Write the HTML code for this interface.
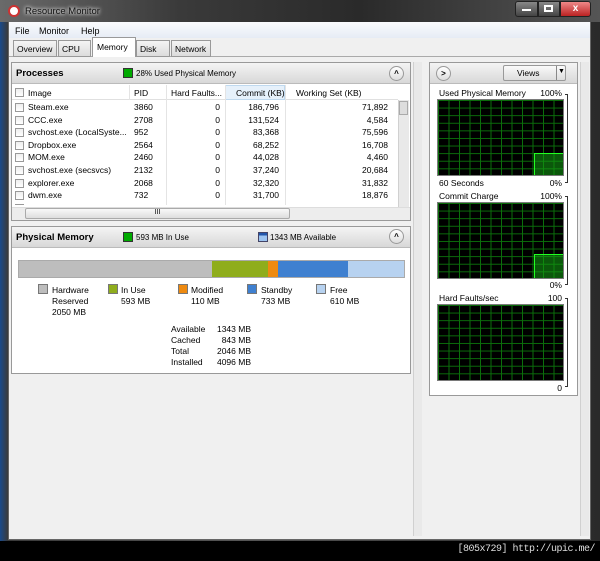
<!DOCTYPE html><html><head><style>
*{margin:0;padding:0;box-sizing:border-box}
body{width:600px;height:561px;background:#000;position:relative;overflow:hidden;font-family:"Liberation Sans",sans-serif;font-size:8.5px;color:#000}
.a{position:absolute}
.hdr{background:linear-gradient(#f4f4f4,#d8d8d8);border-bottom:1px solid #bbb}
.t{position:absolute;white-space:nowrap}
.r{text-align:right}
.cb{position:absolute;width:9px;height:9px;border:1px solid #999;background:linear-gradient(#eee,#fff)}
.col{position:absolute;width:1px;background:#e4e4e4}
.up{position:absolute;width:15px;height:15px;border-radius:50%;border:1px solid #999;background:linear-gradient(#fff,#ddd);font-size:8px;text-align:center;line-height:13px;font-weight:bold}
.sq{position:absolute;width:10px;height:10px;border:1px solid #777}
.g{position:absolute;background-color:#000;border:1px solid #7a7a7a;background-image:linear-gradient(90deg,#0b6e0b 1px,transparent 1px),linear-gradient(#0b6e0b 1px,transparent 1px);background-size:10.5px 100%,100% 7.6px}
.fill{position:absolute;background:rgba(20,160,20,.55);border-top:1px solid #2f2;border-left:1px solid #2f2}
.vs{position:absolute;background:#e9e9e9;border-left:1px solid #d0d0d0}
</style></head><body>
<div class="a" style="left:0;top:0;width:600px;height:541px;background:linear-gradient(90deg,#1a4a8a,#3a3a3a 8px,#555 40%,#2a2a2a)"></div>
<div class="a" style="left:0;top:0;width:600px;height:22px;background:linear-gradient(90deg,#6a6a6a,#3a3a3a 30%,#2a2a2a 60%,#555)"></div>
<div class="a" style="left:8px;top:5px;width:12px;height:12px;border-radius:50%;background:#fff;border:2px solid #c33"></div>
<div class="t" style="left:25px;top:6px;font-size:9.5px;color:#111;text-shadow:0 0 5px #eee,0 0 3px #eee">Resource Monitor</div>
<div class="a" style="left:515px;top:1px;width:23px;height:16px;background:linear-gradient(#888,#444);border:1px solid #222;border-radius:3px 0 0 3px"></div>
<div class="a" style="left:538px;top:1px;width:22px;height:16px;background:linear-gradient(#888,#444);border:1px solid #222"></div>
<div class="a" style="left:560px;top:1px;width:31px;height:16px;background:linear-gradient(#e88,#b22);border:1px solid #222;border-radius:0 3px 3px 0;color:#fff;text-align:center;font-weight:bold;font-size:10px;line-height:14px">x</div>
<div class="a" style="left:522px;top:9px;width:9px;height:2px;background:#fff"></div>
<div class="a" style="left:544px;top:5px;width:9px;height:7px;border:2px solid #fff"></div>
<div class="a" style="left:8px;top:22px;width:583px;height:518px;background:#f0f0f0;border:1px solid #666"></div>
<div class="a" style="left:9px;top:22px;width:581px;height:16px;background:linear-gradient(#fafbfd,#e6ecf5)"></div>
<div class="t" style="left:15px;top:26px;font-size:9px">File</div>
<div class="t" style="left:39px;top:26px;font-size:9px">Monitor</div>
<div class="t" style="left:81px;top:26px;font-size:9px">Help</div>
<div class="a" style="left:9px;top:56px;width:581px;height:1px;background:#aaa"></div>
<div class="a" style="left:13px;top:40px;width:44px;height:17px;background:linear-gradient(#f4f4f4,#dcdcdc);border:1px solid #999"></div><div class="t" style="left:17px;top:44px">Overview</div>
<div class="a" style="left:58px;top:40px;width:33px;height:17px;background:linear-gradient(#f4f4f4,#dcdcdc);border:1px solid #999"></div><div class="t" style="left:62px;top:44px">CPU</div>
<div class="a" style="left:92px;top:37px;width:44px;height:20px;background:#fff;border:1px solid #999;border-bottom:none"></div><div class="t" style="left:97px;top:42px">Memory</div>
<div class="a" style="left:136px;top:40px;width:34px;height:17px;background:linear-gradient(#f4f4f4,#dcdcdc);border:1px solid #999"></div><div class="t" style="left:140px;top:44px">Disk</div>
<div class="a" style="left:171px;top:40px;width:40px;height:17px;background:linear-gradient(#f4f4f4,#dcdcdc);border:1px solid #999"></div><div class="t" style="left:175px;top:44px">Network</div>
<div class="a" style="left:11px;top:62px;width:400px;height:159px;background:#fff;border:1px solid #999"></div>
<div class="a hdr" style="left:12px;top:63px;width:398px;height:21px"></div>
<div class="t" style="left:16px;top:68px;font-size:9.5px;font-weight:bold">Processes</div>
<div class="sq" style="left:123px;top:68px;background:#0a0;border-color:#333"></div>
<div class="t" style="left:136px;top:69px;font-size:8px">28% Used Physical Memory</div>
<div class="up" style="left:389px;top:66px">^</div>
<div class="a" style="left:12px;top:85px;width:386px;height:15px;background:#fff;border-bottom:1px solid #e0e0e0"></div>
<div class="a" style="left:225px;top:85px;width:60px;height:15px;background:#e6f1fb;border:1px solid #bfd9ef"></div>
<div class="cb" style="left:15px;top:88px"></div>
<div class="t" style="left:28px;top:88px">Image</div>
<div class="t" style="left:134px;top:88px">PID</div>
<div class="t" style="left:171px;top:88px">Hard Faults...</div>
<div class="t" style="left:236px;top:88px">Commit (KB)</div>
<div class="t" style="left:296px;top:88px">Working Set (KB)</div>
<div class="col" style="left:129px;top:85px;height:15px"></div><div class="col" style="left:166px;top:85px;height:122px"></div><div class="col" style="left:225px;top:85px;height:122px"></div><div class="col" style="left:285px;top:85px;height:122px"></div>
<div id="rows"></div>
<div class="vs" style="left:398px;top:100px;width:11px;height:107px"></div>
<div class="a" style="left:399px;top:101px;width:9px;height:14px;background:#ddd;border:1px solid #aaa"></div>
<div class="a" style="left:12px;top:207px;width:398px;height:13px;background:#ededed;border-top:1px solid #ddd"></div>
<div class="a" style="left:25px;top:208px;width:265px;height:11px;background:linear-gradient(#f8f8f8,#ddd);border:1px solid #aaa;border-radius:2px;text-align:center;font-size:7px">III</div>
<div class="a" style="left:11px;top:226px;width:400px;height:148px;background:#fff;border:1px solid #999"></div>
<div class="a hdr" style="left:12px;top:227px;width:398px;height:21px"></div>
<div class="t" style="left:16px;top:232px;font-size:9.5px;font-weight:bold">Physical Memory</div>
<div class="sq" style="left:123px;top:232px;background:#0a0;border-color:#333"></div>
<div class="t" style="left:136px;top:233px;font-size:8px">593 MB In Use</div>
<div class="sq" style="left:258px;top:232px;background:linear-gradient(#2255aa 30%,#9cc3f0 30%);border-color:#446"></div>
<div class="t" style="left:270px;top:233px;font-size:8px">1343 MB Available</div>
<div class="up" style="left:389px;top:229px">^</div>
<div class="a" style="left:18px;top:260px;width:387px;height:18px;border:1px solid #aaa;display:flex">
<div style="width:193px;background:#bdbdbd"></div><div style="width:56px;background:#8fad1c"></div><div style="width:10px;background:#ee8a10"></div><div style="width:70px;background:#3f80d0"></div><div style="flex:1;background:#b7d2f0"></div></div>
<div class="sq" style="left:38px;top:284px;background:#bdbdbd"></div><div class="t" style="left:52px;top:285px;line-height:11px">Hardware<br>Reserved<br>2050 MB</div>
<div class="sq" style="left:108px;top:284px;background:#8fad1c"></div><div class="t" style="left:121px;top:285px;line-height:11px">In Use<br>593 MB</div>
<div class="sq" style="left:178px;top:284px;background:#ee8a10"></div><div class="t" style="left:191px;top:285px;line-height:11px">Modified<br>110 MB</div>
<div class="sq" style="left:247px;top:284px;background:#3f80d0"></div><div class="t" style="left:261px;top:285px;line-height:11px">Standby<br>733 MB</div>
<div class="sq" style="left:316px;top:284px;background:#b7d2f0"></div><div class="t" style="left:330px;top:285px;line-height:11px">Free<br>610 MB</div>
<div class="t" style="left:171px;top:324px;line-height:11px">Available<br>Cached<br>Total<br>Installed</div>
<div class="t r" style="left:211px;width:40px;top:324px;line-height:11px">1343 MB<br>843 MB<br>2046 MB<br>4096 MB</div>
<div class="vs" style="left:413px;top:62px;width:9px;height:474px"></div>
<div class="a" style="left:429px;top:62px;width:149px;height:334px;background:#fff;border:1px solid #999"></div>
<div class="a hdr" style="left:430px;top:63px;width:147px;height:21px"></div>
<div class="up" style="left:436px;top:66px">&gt;</div>
<div class="a" style="left:503px;top:65px;width:63px;height:16px;background:linear-gradient(#fafafa,#ddd);border:1px solid #999;border-radius:2px"></div>
<div class="t" style="left:517px;top:68px">Views</div>
<div class="a" style="left:556px;top:66px;width:1px;height:14px;background:#888"></div>
<div class="t" style="left:558px;top:68px;font-size:7px">▼</div>
<div class="vs" style="left:580px;top:62px;width:9px;height:474px"></div>
<div class="t" style="left:439px;top:88px">Used Physical Memory</div><div class="t r" style="left:530px;width:32px;top:88px">100%</div>
<div class="g" style="left:437px;top:99px;width:127px;height:77px"></div>
<div class="fill" style="left:534px;top:153px;width:29px;height:22px"></div>
<div class="t" style="left:439px;top:178px">60 Seconds</div><div class="t r" style="left:530px;width:32px;top:178px">0%</div>
<div class="t" style="left:439px;top:191px">Commit Charge</div><div class="t r" style="left:530px;width:32px;top:191px">100%</div>
<div class="g" style="left:437px;top:202px;width:127px;height:77px"></div>
<div class="fill" style="left:534px;top:254px;width:29px;height:24px"></div>
<div class="t r" style="left:530px;width:32px;top:280px">0%</div>
<div class="t" style="left:439px;top:293px">Hard Faults/sec</div><div class="t r" style="left:530px;width:32px;top:293px">100</div>
<div class="g" style="left:437px;top:304px;width:127px;height:77px"></div>
<div class="t r" style="left:530px;width:32px;top:383px">0</div>
<div class="a" style="left:565px;top:94px;width:3px;height:89px;border:1px solid #333;border-left:none"></div>
<div class="a" style="left:565px;top:196px;width:3px;height:89px;border:1px solid #333;border-left:none"></div>
<div class="a" style="left:565px;top:298px;width:3px;height:89px;border:1px solid #333;border-left:none"></div>
<div class="t r" style="left:400px;width:195px;top:544px;font-size:10px;color:#ddd;font-family:'Liberation Mono',monospace;letter-spacing:-0.5px">[805x729] http://upic.me/</div>
<script>
var d=[["Steam.exe",3860,"186,796","71,892"],["CCC.exe",2708,"131,524","4,584"],["svchost.exe (LocalSyste...",952,"83,368","75,596"],["Dropbox.exe",2564,"68,252","16,708"],["MOM.exe",2460,"44,028","4,460"],["svchost.exe (secsvcs)",2132,"37,240","20,684"],["explorer.exe",2068,"32,320","31,832"],["dwm.exe",732,"31,700","18,876"],["SearchIndexer.exe",3572,"31,204","9,580"]],h="";
d.forEach(function(r,i){var y=102+i*12.6;h+='<div class="cb" style="left:15px;top:'+(y+1)+'px"></div><div class="t" style="left:28px;top:'+y+'px">'+r[0]+'</div><div class="t" style="left:134px;top:'+y+'px">'+r[1]+'</div><div class="t r" style="left:180px;width:40px;top:'+y+'px">0</div><div class="t r" style="left:230px;width:49px;top:'+y+'px">'+r[2]+'</div><div class="t r" style="left:330px;width:58px;top:'+y+'px">'+r[3]+'</div>';});
h+='<div class="a" style="left:12px;top:205px;width:386px;height:2px;background:#fff"></div>';
document.getElementById("rows").innerHTML=h;
</script>
</body></html>
